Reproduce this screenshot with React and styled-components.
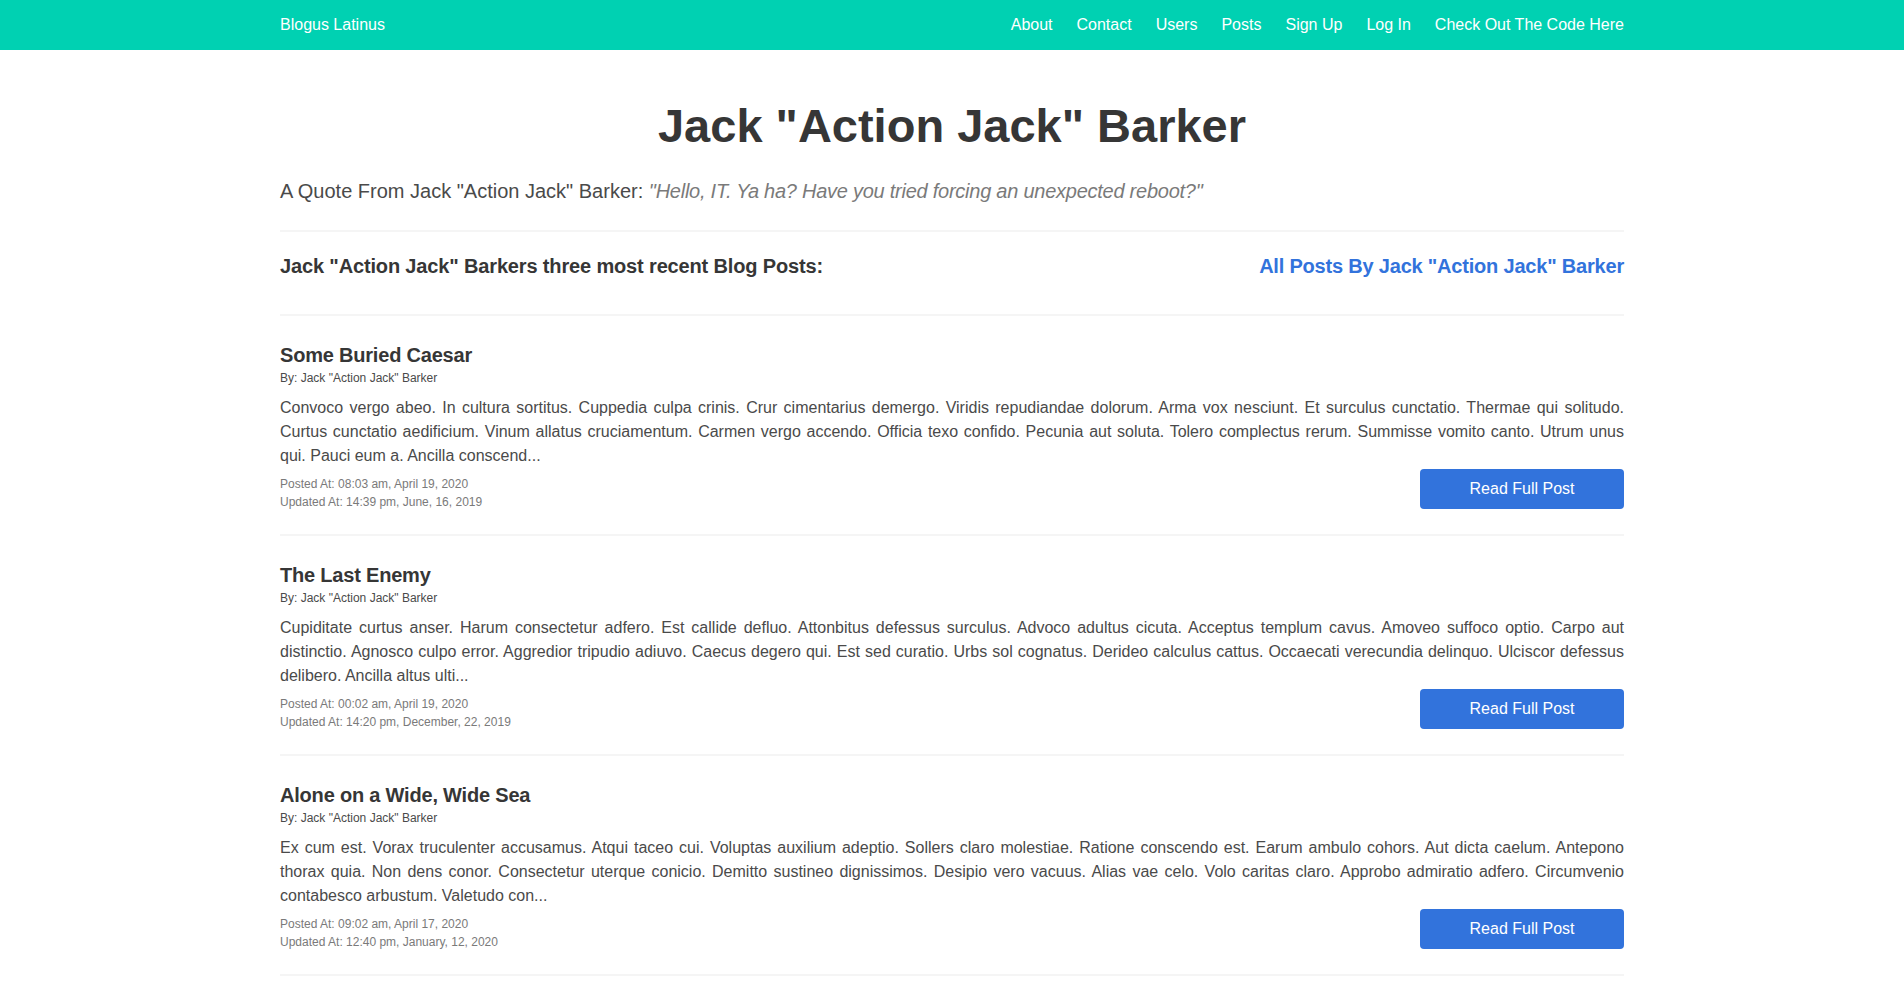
import styled, { createGlobalStyle } from 'styled-components'

const GlobalStyle = createGlobalStyle`
    html, body {
        margin: 0;
        padding: 0;
        background: #fff;
        font-family: "Liberation Sans", Arial, sans-serif;
        color: #4a4a4a;
        font-size: 16px;
        line-height: 1.5;
    }
    * {
        box-sizing: border-box;
    }
`;

const Navbar = styled.nav`
    background-color: #00d1b2;
    height: 50px;

    .inner {
        width: 1344px;
        margin: 0 auto;
        height: 100%;
        display: flex;
        align-items: center;
        justify-content: space-between;
    }

    a {
        color: #fff;
        text-decoration: none;
        font-size: 16px;
    }

    .menu {
        display: flex;
        gap: 24px;
    }
`;

const Container = styled.main`
    width: 1344px;
    margin: 0 auto;
    padding-top: 50px;
`;

const Title = styled.h1`
    margin: 0 0 26px;
    text-align: center;
    font-size: 47px;
    line-height: 1.125;
    font-weight: 700;
    color: #363636;
`;

const Quote = styled.p`
    margin: 0;
    font-size: 20px;
    line-height: 1.25;
    color: #4a4a4a;

    em {
        color: #7a7a7a;
        letter-spacing: -0.25px;
    }
`;

const Divider = styled.hr`
    border: none;
    background-color: #f5f5f5;
    height: 2px;
    margin: ${(props) => props.margin || '0'};
`;

const Level = styled.div`
    display: flex;
    justify-content: space-between;
    align-items: center;
    margin: 23px 0 37px;

    h3 {
        margin: 0;
        font-size: 20px;
        line-height: 1.125;
        font-weight: 700;
        color: #363636;
        letter-spacing: -0.15px;
    }

    a {
        font-size: 20px;
        line-height: 1.125;
        font-weight: 700;
        color: #3273dc;
        text-decoration: none;
        letter-spacing: -0.2px;
    }
`;

const Post = styled.article`
    padding: 28px 0 25.5px;
    border-bottom: 2px solid #f5f5f5;

    h4 {
        margin: 0;
        font-size: 20px;
        line-height: 1.125;
        font-weight: 700;
        color: #363636;
        letter-spacing: -0.2px;
    }

    .by {
        margin: 2px 0 9px;
        font-size: 12px;
        line-height: 18px;
        color: #4a4a4a;
    }

    .body {
        margin: 0;
        font-size: 16px;
        line-height: 24px;
        text-align: justify;
    }

    .footer {
        display: flex;
        justify-content: space-between;
        align-items: flex-end;
        margin-top: 1px;
    }

    .dates {
        margin-bottom: -2px;
        font-size: 12px;
        line-height: 18px;
        color: #7a7a7a;
    }
`;

const Button = styled.button`
    width: 204px;
    height: 40px;
    border: none;
    border-radius: 4px;
    background-color: #3273dc;
    color: #fff;
    font-family: inherit;
    font-size: 16px;
    cursor: pointer;
`;

const posts = [
    {
        title: 'Some Buried Caesar',
        body: 'Convoco vergo abeo. In cultura sortitus. Cuppedia culpa crinis. Crur cimentarius demergo. Viridis repudiandae dolorum. Arma vox nesciunt. Et surculus cunctatio. Thermae qui solitudo. Curtus cunctatio aedificium. Vinum allatus cruciamentum. Carmen vergo accendo. Officia texo confido. Pecunia aut soluta. Tolero complectus rerum. Summisse vomito canto. Utrum unus qui. Pauci eum a. Ancilla conscend...',
        posted: '08:03 am, April 19, 2020',
        updated: '14:39 pm, June, 16, 2019',
    },
    {
        title: 'The Last Enemy',
        body: 'Cupiditate curtus anser. Harum consectetur adfero. Est callide defluo. Attonbitus defessus surculus. Advoco adultus cicuta. Acceptus templum cavus. Amoveo suffoco optio. Carpo aut distinctio. Agnosco culpo error. Aggredior tripudio adiuvo. Caecus degero qui. Est sed curatio. Urbs sol cognatus. Derideo calculus cattus. Occaecati verecundia delinquo. Ulciscor defessus delibero. Ancilla altus ulti...',
        posted: '00:02 am, April 19, 2020',
        updated: '14:20 pm, December, 22, 2019',
    },
    {
        title: 'Alone on a Wide, Wide Sea',
        body: 'Ex cum est. Vorax truculenter accusamus. Atqui taceo cui. Voluptas auxilium adeptio. Sollers claro molestiae. Ratione conscendo est. Earum ambulo cohors. Aut dicta caelum. Antepono thorax quia. Non dens conor. Consectetur uterque conicio. Demitto sustineo dignissimos. Desipio vero vacuus. Alias vae celo. Volo caritas claro. Approbo admiratio adfero. Circumvenio contabesco arbustum. Valetudo con...',
        posted: '09:02 am, April 17, 2020',
        updated: '12:40 pm, January, 12, 2020',
    },
]

const author = 'Jack "Action Jack" Barker'

const App = () => {
    return (
        <>
            <GlobalStyle />
            <Navbar>
                <div className="inner">
                    <a href="#">Blogus Latinus</a>
                    <div className="menu">
                        <a href="#">About</a>
                        <a href="#">Contact</a>
                        <a href="#">Users</a>
                        <a href="#">Posts</a>
                        <a href="#">Sign Up</a>
                        <a href="#">Log In</a>
                        <a href="#">Check Out The Code Here</a>
                    </div>
                </div>
            </Navbar>
            <Container>
                <Title>{author}</Title>
                <Quote>A Quote From {author}: <em>"Hello, IT. Ya ha? Have you tried forcing an unexpected reboot?"</em></Quote>
                <Divider margin="26px 0 0" />
                <Level>
                    <h3>Jack "Action Jack" Barkers three most recent Blog Posts:</h3>
                    <a href="#">All Posts By {author}</a>
                </Level>
                <Divider />
                {posts.map((post) => (
                    <Post key={post.title}>
                        <h4>{post.title}</h4>
                        <div className="by">By: {author}</div>
                        <p className="body">{post.body}</p>
                        <div className="footer">
                            <div className="dates">
                                Posted At: {post.posted}<br />
                                Updated At: {post.updated}
                            </div>
                            <Button>Read Full Post</Button>
                        </div>
                    </Post>
                ))}
            </Container>
        </>
    )
}

export default App;
